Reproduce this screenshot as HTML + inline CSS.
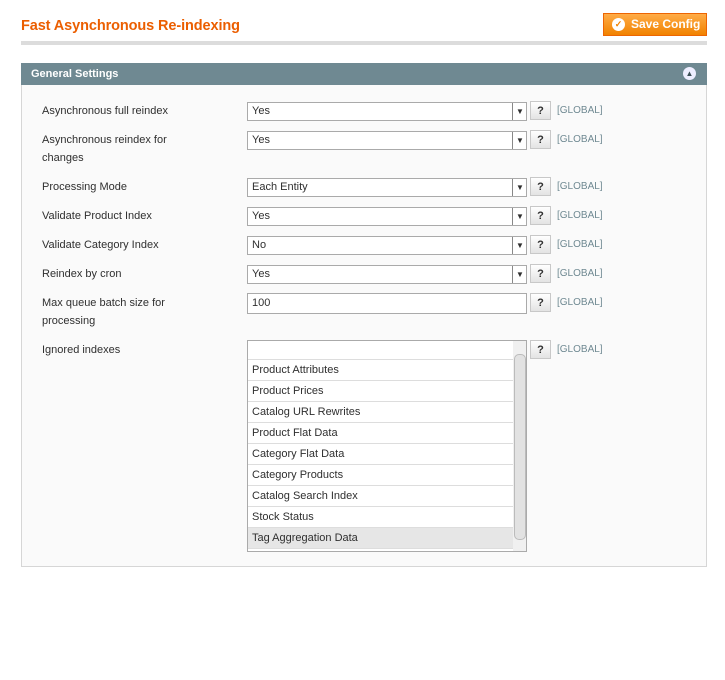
<!DOCTYPE html><html><head><style>
body{margin:0;width:725px;height:680px;background:#fff;font-family:"Liberation Sans",Arial,sans-serif;font-size:11px;color:#2f2f2f;position:relative}
.a{position:absolute}
.t{left:21px;top:18px;font-size:14.5px;font-weight:bold;color:#eb5e00;letter-spacing:-0.1px}
.line{left:21px;top:41px;width:686px;height:4px;background:#dcdcdc}
.btn{left:603px;top:13px;width:102px;height:21px;background:linear-gradient(#ffac47,#f18200);border:1px solid #ed6502;color:#fff;font-weight:bold;font-size:12px;line-height:21px}
.btn i{position:absolute;left:8px;top:4px;width:13px;height:13px;border-radius:50%;background:#fff;color:#f18200;font-style:normal;font-size:9px;line-height:13px;text-align:center}
.hd{left:21px;top:63px;width:686px;height:22px;background:#6f8992;color:#fff;font-weight:bold;font-size:11px;line-height:22px}
.box{left:21px;top:85px;width:684px;height:481px;border:1px solid #d6d6d6;border-top:0;background:#fafafa}
.l{left:42px;line-height:18px}
.s{left:247px;width:278px;height:17px;border:1px solid #aaa;background:#fff;line-height:17px;text-indent:4px}
.s b{position:absolute;right:0;top:0;width:13px;height:17px;border-left:1px solid #888;font-size:8px;text-indent:3px;line-height:17px;font-weight:normal}
.q{left:530px;width:21px;height:19px;border:1px solid #c8c8c8;background:linear-gradient(#fff,#e3e3e3);text-align:center;line-height:19px;font-weight:bold;box-sizing:border-box}
.g{left:557px;color:#6f8992;font-size:10px;line-height:19px}
.ms{left:247px;top:340px;width:278px;height:210px;border:1px solid #aaa;background:#fff;overflow:hidden}
.ms .it{height:20px;border-bottom:1px solid #ddd;line-height:20px;padding-left:4px;width:261px;font-size:11px}
.sb{position:absolute;right:0;top:0;width:13px;height:210px;background:#f0f0f0}
.sb span{position:absolute;left:1px;top:13px;width:10px;height:184px;border:1px solid #bbb;border-radius:5px;background:#e2e2e2}
</style></head><body>
<div class="a t">Fast Asynchronous Re-indexing</div>
<div class="a line"></div>
<div class="a btn"><i>✓</i><span style="position:absolute;left:27px">Save Config</span></div>
<div class="a hd"><span style="margin-left:10px">General Settings</span><span style="position:absolute;right:11px;top:4px;width:13px;height:13px;border-radius:50%;background:#eef;color:#3d4f56;font-size:8px;line-height:13px;text-align:center">▲</span></div>
<div class="a box"></div>

<div class="a l" style="top:102px">Asynchronous full reindex</div>
<div class="a s" style="top:102px">Yes<b>▼</b></div><div class="a q" style="top:101px">?</div><div class="a g" style="top:101px">[GLOBAL]</div>

<div class="a l" style="top:131px">Asynchronous reindex for<br>changes</div>
<div class="a s" style="top:131px">Yes<b>▼</b></div><div class="a q" style="top:130px">?</div><div class="a g" style="top:130px">[GLOBAL]</div>

<div class="a l" style="top:178px">Processing Mode</div>
<div class="a s" style="top:178px">Each Entity<b>▼</b></div><div class="a q" style="top:177px">?</div><div class="a g" style="top:177px">[GLOBAL]</div>

<div class="a l" style="top:207px">Validate Product Index</div>
<div class="a s" style="top:207px">Yes<b>▼</b></div><div class="a q" style="top:206px">?</div><div class="a g" style="top:206px">[GLOBAL]</div>

<div class="a l" style="top:236px">Validate Category Index</div>
<div class="a s" style="top:236px">No<b>▼</b></div><div class="a q" style="top:235px">?</div><div class="a g" style="top:235px">[GLOBAL]</div>

<div class="a l" style="top:265px">Reindex by cron</div>
<div class="a s" style="top:265px">Yes<b>▼</b></div><div class="a q" style="top:264px">?</div><div class="a g" style="top:264px">[GLOBAL]</div>

<div class="a l" style="top:294px">Max queue batch size for<br>processing</div>
<div class="a s" style="top:293px;height:19px;line-height:19px">100</div><div class="a q" style="top:293px">?</div><div class="a g" style="top:293px">[GLOBAL]</div>

<div class="a l" style="top:341px">Ignored indexes</div>
<div class="a ms">
<div class="it" style="height:18px"></div><div class="it">Product Attributes</div><div class="it">Product Prices</div><div class="it">Catalog URL Rewrites</div><div class="it">Product Flat Data</div><div class="it">Category Flat Data</div><div class="it">Category Products</div><div class="it">Catalog Search Index</div><div class="it">Stock Status</div><div class="it" style="background:#e6e6e6">Tag Aggregation Data</div>
<div class="sb"><span></span></div></div>
<div class="a q" style="top:340px">?</div><div class="a g" style="top:340px">[GLOBAL]</div>
</body></html>
